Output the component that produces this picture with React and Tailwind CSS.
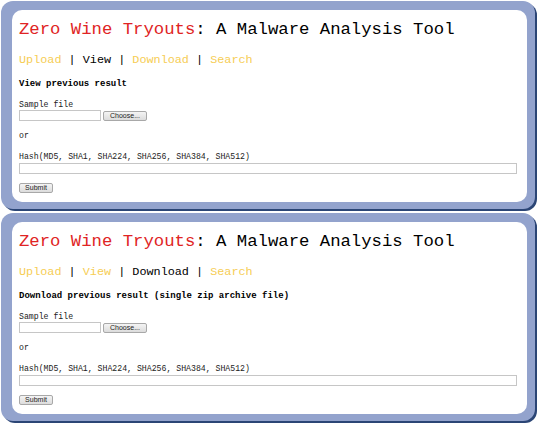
import React from 'react';

const links = ['Upload', 'View', 'Download', 'Search'];

const Panel = ({ active, heading }) => {
    return (
        <div className="w-[534px] rounded-[12px] bg-[#93a3cd] pl-[11px] pr-[8px] pt-[9px] pb-[7px] shadow-[2px_2px_0_#2b4575]">
            <div className="h-[192px] rounded-[10px] bg-white pl-[7px] pt-[10px] font-['Liberation_Mono',monospace] text-black">
                <div className="text-[17.3px] leading-[20px] whitespace-nowrap">
                    <span className="text-[#e02424]">Zero Wine Tryouts</span>: A Malware Analysis Tool
                </div>

                <div className="mt-[10px] text-[11.8px] leading-[20px] whitespace-nowrap">
                    {links.map((l, i) => (
                        <span key={l}>
                            {i > 0 && <span className="text-black"> | </span>}
                            <span className={l === active ? 'text-black' : 'text-[#f6cd55]'}>{l}</span>
                        </span>
                    ))}
                </div>

                <div className="mt-[8px] text-[9px] font-bold leading-[12px] whitespace-nowrap">{heading}</div>

                <div className="mt-[10px] text-[8.2px] leading-[10px] text-[#222]">Sample file</div>
                <div className="flex items-center gap-[2px]">
                    <input readOnly className="h-[11px] w-[82px] border border-[#c6c6c6] bg-white outline-none" />
                    <button className="h-[10px] w-[44px] rounded-[2px] border border-[#a8a8a8] bg-gradient-to-b from-[#f4f4f4] to-[#dcdcdc] font-['Liberation_Sans',sans-serif] text-[7px] leading-[8px] text-[#222]">
                        Choose...
                    </button>
                </div>

                <div className="mt-[10px] text-[8.2px] leading-[10px] text-[#222]">or</div>

                <div className="mt-[11px] text-[8.2px] leading-[10px] text-[#222] whitespace-nowrap">
                    Hash(MD5, SHA1, SHA224, SHA256, SHA384, SHA512)
                </div>
                <input readOnly className="mt-[1px] block h-[11px] w-[498px] border border-[#c6c6c6] bg-white outline-none" />

                <button className="mt-[9px] block h-[10px] w-[34px] rounded-[2px] border border-[#a8a8a8] bg-gradient-to-b from-[#f4f4f4] to-[#dcdcdc] font-['Liberation_Sans',sans-serif] text-[7px] leading-[8px] text-[#222]">
                    Submit
                </button>
            </div>
        </div>
    );
};

export default function App() {
    return (
        <div className="h-[426px] w-[540px] bg-white pl-[1px] pt-[1px] flex flex-col gap-[4px]">
            <Panel active="View" heading="View previous result" />
            <Panel active="Download" heading="Download previous result (single zip archive file)" />
        </div>
    );
}
